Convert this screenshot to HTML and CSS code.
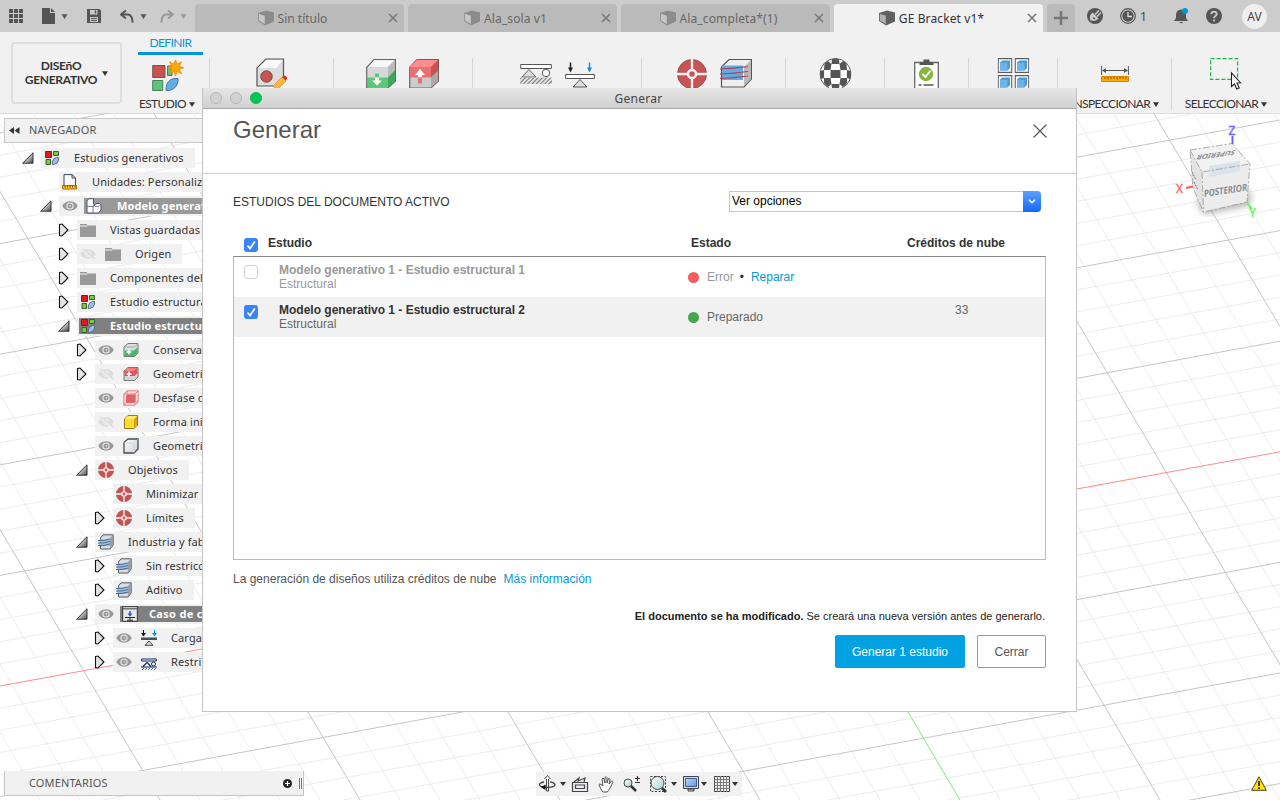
FILE: index.html
```html
<!DOCTYPE html>
<html lang="es">
<head>
<meta charset="utf-8">
<title>GE Bracket v1*</title>
<link rel="stylesheet" href="styles.css">
</head>
<body>
<svg class="defs" width="0" height="0">
  <defs>
    <linearGradient id="gTri" x1="0" y1="0" x2="1" y2="1"><stop offset=".3" stop-color="#f4f4f4"/><stop offset="1" stop-color="#444"/></linearGradient>
    <linearGradient id="gFace" x1="0" y1="0" x2="1" y2="1"><stop offset="0" stop-color="#fff"/><stop offset="1" stop-color="#cfcfcf"/></linearGradient>
    <linearGradient id="gLens" x1="0" y1="0" x2="1" y2="1"><stop offset="0" stop-color="#fff"/><stop offset="1" stop-color="#a9cfd0"/></linearGradient>
    <linearGradient id="gBlue" x1="0" y1="0" x2="1" y2="1"><stop offset="0" stop-color="#b9dcf7"/><stop offset="1" stop-color="#5f95d6"/></linearGradient>
    <pattern id="hatch" width="3" height="3" patternUnits="userSpaceOnUse" patternTransform="rotate(45)"><rect width="3" height="3" fill="#e2e2e2"/><rect width="1" height="3" fill="#777"/></pattern>
    <symbol id="cubeTab" viewBox="0 0 16 16"><path d="M0 3 8 .5 16 2.500V11.500L7 15.500 0 11z" fill="currentColor"/><path d="M.8 3.800 6.800 5.700V14L.8 10.500z" fill="#fff" opacity=".5"/></symbol>
    <symbol id="close" viewBox="0 0 10 10"><path d="M1 1 9 9M9 1 1 9" stroke="currentColor" stroke-width="1.500"/></symbol>
    <symbol id="caret" viewBox="0 0 6 5"><path d="M0 .3H6L3 5z" fill="currentColor"/></symbol>
    <symbol id="open" viewBox="0 0 12 12"><path d="M11 .8V11.200H.6z" fill="url(#gTri)" stroke="#333"/></symbol>
    <symbol id="shut" viewBox="0 0 12 14"><path d="M1.500 1.500 4 1 10 7 4 13 1.500 12.500z" fill="#e4e4e4" stroke="#111" stroke-width="1.100"/></symbol>
    <symbol id="eye" viewBox="0 0 16 12"><path d="M.3 6C3-.2 13-.2 15.700 6 13 12.200 3 12.200.3 6z" fill="#999"/><circle cx="8" cy="6" r="3.600" fill="#eee"/><circle cx="8" cy="6" r="2.500" fill="#999"/><circle cx="8.300" cy="6" r=".8" fill="#eee"/></symbol>
    <symbol id="eyeOff" viewBox="0 0 16 12"><path d="M.3 6C3-.2 13-.2 15.700 6 13 12.200 3 12.200.3 6z" fill="#dcdcdc"/><circle cx="8" cy="6" r="3" fill="#eee"/><circle cx="8" cy="6" r="1.800" fill="#d4d4d4"/><path d="M1 0 15 12" stroke="#f0f0f0" stroke-width="2"/><path d="M2.500.5 15 11" stroke="#cfcfcf"/></symbol>
    <symbol id="folder" viewBox="0 0 16 14"><path d="M0 0H6.500L8 1.500H0zM0 2.500H7L8 1.500H16V13H0z" fill="#999"/></symbol>
    <symbol id="study" viewBox="0 0 16 16"><path d="M1.500 1.500H7.500V7.500H1.500z" fill="#e2191f" stroke="#8c1a1a"/><path d="M9.500 1.500h5v4h-5zM2 9.500h4.500v5H2z" fill="#76cc3a" stroke="#3b5c35"/><path d="M14.500 7.500V10Q14 14 9.500 14.500H8.300V12Q9 8 12.500 7.500z" fill="#9cc0e4" stroke="#5b6e82"/></symbol>
    <symbol id="units" viewBox="0 0 16 16"><path d="M2 11.500V.6H10L13.500 4V11.500z" fill="#f8fbff" stroke="#3c4656"/><path d="M10 .6V4h3.500" fill="none" stroke="#3c4656"/><path d="M.5 11.500h14v3.500H.5z" fill="#ffc21a" stroke="#a86a00"/><path d="M3 12v1.500M5.500 12v1.500M8 12v1.500M10.500 12v1.500M13 12v1.500" stroke="#7c4e00"/></symbol>
    <symbol id="comps" viewBox="0 0 16 16"><path d="M1 2.500 3 .7H7.500V5.500H8V8L10 5.500H13.500L15 7V12L12.500 15H1.500L1 14z" fill="#fafcff" stroke="#4c5463"/><path d="M1 8.500H7V15M7 9l2-2M9 8.500H13L15 6.500" fill="none" stroke="#7c8493"/></symbol>
    <symbol id="cubeGreen" viewBox="0 0 16 16"><path d="M1 5 5 1.500H15V11L11.500 14.500H1z" fill="#ddd" stroke="#777"/><path d="M1.500 8.500H11L14.500 5V10.800L11.300 14H1.500z" fill="#45b868"/><path d="M1.500 5H11.500L14.500 2" fill="none" stroke="#aaa"/><path d="M6 7.500v5M3.500 10h5" stroke="#fff" stroke-width="1.500"/></symbol>
    <symbol id="cubeRed" viewBox="0 0 16 16"><path d="M1 5 5 1.500H15V11L11.500 14.500H1z" fill="#d5d5d5" stroke="#777"/><path d="M1.500 5 5.200 2H14.500V7L11.500 10H1.500z" fill="#dc5858"/><path d="M1.500 5H11L14 2.300H5z" fill="#ff8585"/><path d="M6 5.500v5M3.500 8h5" stroke="#fff" stroke-width="1.500"/></symbol>
    <symbol id="cubeOffset" viewBox="0 0 16 16"><path d="M.8 4 4 .8H15.200V12L12 15.200H.8z" fill="#fbdede" stroke="#dc7474" stroke-width=".9"/><path d="M.8 4H12V15M12 4l3-3M.8 15 4 12V1M4 12H15" fill="none" stroke="#dc7474" stroke-width=".8"/><path d="M3 6 5 4.500H12.500V11L10.500 13H3z" fill="#df6464"/></symbol>
    <symbol id="cubeYellow" viewBox="0 0 16 16"><path d="M1.500 5 5 1.500H14.500V11L11 14.500H1.500z" fill="#ffdc2e" stroke="#9d7a0c"/><path d="M11 5 14 2V11L11 14z" fill="#d4a414"/><path d="M2 5H11l3-3H5z" fill="#ffe96a"/></symbol>
    <symbol id="cubeWhite" viewBox="0 0 16 16"><path d="M1 5Q1 4 5 1H15V11Q14 12 11 15H1z" fill="url(#gFace)" stroke="#444b57" stroke-width="1.300"/><path d="M1.500 5H11V14.500M11 5l3.500-3.500" fill="none" stroke="#d3d6db"/></symbol>
    <symbol id="target" viewBox="0 0 30 30"><circle cx="15" cy="15" r="14.500" fill="#c95353" stroke="#8b5555"/><path d="M15 0V30M0 15H30" stroke="#f4f4f4" stroke-width="2.400"/><circle cx="15" cy="15" r="4" fill="#c95353" stroke="#f4f4f4" stroke-width="2.500"/></symbol>
    <symbol id="industry" viewBox="0 0 16 16"><path d="M2.500 4 5 .8H15.200V11L12 15H2.500z" fill="#d9dce0" stroke="#555c66"/><path d="M12 4V14.500L15 11V1z" fill="#999fa8"/><path d="M1 5.500H12V12H1z" fill="#9ec6ec"/><path d="M0 6.500Q6 7 12 5M0 9Q6 9.500 12 7.500M0 11.500Q6 12 12 10" fill="none" stroke="#3b5878" stroke-width=".9"/></symbol>
    <symbol id="caseIcon" viewBox="0 0 16 16"><path d="M.7.700H15.300V15.300H.7z" fill="#e8e8e8" stroke="#333"/><path d="M1 2h14v1.500H1z" fill="#777"/><path d="M8 5v5" stroke="#1e5ad2" stroke-width="1.500"/><path d="M5.500 7.500h5L8 10.500z" fill="#1e5ad2"/><path d="M3 11.500H13M8 12v2M5 14.200h6" stroke="#222"/></symbol>
    <symbol id="loads" viewBox="0 0 30 26"><path d="M5.500.5V7" stroke="#222" stroke-width="1.500"/><path d="M3 5.500H8L5.500 10.500z" fill="#222"/><path d="M24.500.5V7" stroke="#1c87dc" stroke-width="1.500"/><path d="M22 5.500h5l-2.500 5z" fill="#1c87dc"/><path d="M.6 12.500H29.400v4H.6z" fill="#fff" stroke="#555"/><path d="M15 17.500 22 25H8z" fill="#ddd" stroke="#555"/></symbol>
    <symbol id="loadS" viewBox="0 0 16 16"><path d="M2.500 0V4" stroke="#111"/><path d="M0 3H5L2.500 6.500z" fill="#111"/><path d="M13.500 0V4" stroke="#0d8bea"/><path d="M11 3h5l-2.500 3.500z" fill="#0d8bea"/><path d="M0 7.500H16v2.500H0z" fill="#465159"/><path d="M8 11 12 15.300H4z" fill="#ddd" stroke="#444"/></symbol>
    <symbol id="restS" viewBox="0 0 16 12"><path d="M.6 1h14.800v2H.6z" fill="#fff" stroke="#0f2c5d"/><path d="M2 8.500 6 4.500l4 4M0 9H16" fill="none" stroke="#0f2c5d" stroke-width="1.200"/><circle cx="12.500" cy="6" r="2" fill="none" stroke="#0f2c5d"/><path d="M1 12l2-2M4 12l2-2M7 12l2-2M10 12l2-2M13 12l2-2" stroke="#54718d"/></symbol>
    <symbol id="tile" viewBox="0 0 15 15"><path d="M.7.700H14.300V14.300H.7z" fill="#fff" stroke="#5c5c5c" stroke-width="1.200"/><path d="M2.500 4.500 5 2.500H12.500V10L10 12.500H2.500z" fill="#4b99d6"/><path d="M2.500 4.800H10V12.500H2.500z" fill="#6bb3e8"/></symbol>
  </defs>
</svg>

<div class="app">
  <div class="topbar">
    <div class="quick">
      <svg class="q-grid" width="14" height="14"><path d="M0 0h4v4H0zM5 0h4v4H5zM10 0h4v4h-4zM0 5h4v4H0zM5 5h4v4H5zM10 5h4v4h-4zM0 10h4v4H0zM5 10h4v4H5zM10 10h4v4h-4z" fill="#555"/></svg>
      <svg class="q-file" width="13" height="16"><path d="M0 0H8V5H13V16H0zM9 0 13 4H9z" fill="#555"/></svg>
      <svg class="q-caret" width="7" height="5"><use href="#caret"/></svg>
      <svg class="q-save" width="14" height="14"><path d="M0 0H12.500L14 1.500V14H0z" fill="#555"/><path d="M3 1h7.500v4.500H3zM3 8h8v5H3z" fill="#ccc"/><path d="M4 9.500h6M4 11.500h6" stroke="#555"/><path d="M8.500 1.500v3" stroke="#555" stroke-width="1.500"/></svg>
      <svg class="q-undo" width="14" height="13"><path d="M6 .5 1 4.500 6 8.500M1.500 4.500H8Q12.500 5 12.500 12.500" fill="none" stroke="#555" stroke-width="2"/></svg>
      <svg class="q-caret" width="7" height="5"><use href="#caret"/></svg>
      <svg class="q-redo" width="14" height="13"><path d="M8 .5l5 4-5 4M12.500 4.500H6Q1.500 5 1.500 12.500" fill="none" stroke="#999" stroke-width="2"/></svg>
      <svg class="q-caret dim" width="7" height="5"><use href="#caret"/></svg>
    </div>
    <div class="tabs">
      <div class="tab"><svg width="16" height="16"><use href="#cubeTab"/></svg><span>Sin título</span><svg class="x" width="10" height="10"><use href="#close"/></svg></div>
      <div class="tab"><svg width="16" height="16"><use href="#cubeTab"/></svg><span class="wide">Ala_sola v1</span><svg class="x" width="10" height="10"><use href="#close"/></svg></div>
      <div class="tab"><svg width="16" height="16"><use href="#cubeTab"/></svg><span class="wide">Ala_completa*(1)</span><svg class="x" width="10" height="10"><use href="#close"/></svg></div>
      <div class="tab active"><svg width="16" height="16"><use href="#cubeTab"/></svg><span class="wide">GE Bracket v1*</span><svg class="x" width="10" height="10"><use href="#close"/></svg></div>
      <div class="tab plus"><svg width="14" height="14"><path d="M7 0V14M0 7H14" stroke="#777" stroke-width="2.500"/></svg></div>
    </div>
    <div class="status">
      <svg class="s-plug" width="16" height="16"><circle cx="8" cy="8" r="8" fill="#555"/><path d="M3.500 12.500Q1.500 7.500 5.500 4.500L11.500 10.500Q8.500 14 4.500 12.500" fill="#ccc"/><path d="M8 6.500 12 2.500M10 8.500 14 4.500" stroke="#ccc" stroke-width="1.600"/><path d="M6 9.500 8 11" stroke="#555" stroke-width="1.500"/></svg>
      <svg class="s-clock" width="16" height="16"><circle cx="8" cy="8" r="7.300" fill="#ccc" stroke="#555" stroke-width="1.200"/><circle cx="8" cy="8" r="5.700" fill="#555"/><path d="M8 4v4.500h4" stroke="#ddd" stroke-width="1.300" fill="none"/></svg>
      <span class="jobs">1</span>
      <svg class="s-bell" width="15" height="16"><path d="M0 13 2 10V7Q2 2 7 1.500 12 2 12 7v3l2 3zM5 14h4Q8 16.500 5 14z" fill="#555"/><circle cx="11" cy="3" r="3" fill="#0696d7"/></svg>
      <svg class="s-help" width="16" height="16"><circle cx="8" cy="8" r="8" fill="#555"/><path d="M5.300 6.200Q5.500 3.700 8 3.700T10.700 6.100Q10.700 7.300 9.200 8.200 8 9 8 10.200" fill="none" stroke="#ccc" stroke-width="1.800"/><circle cx="8" cy="12.500" r="1.100" fill="#ccc"/></svg>
      <span class="avatar">AV</span>
    </div>
  </div>

  <div class="ribbon">
    <div class="workspace"><span>DISEñO<br>GENERATIVO</span><svg width="6" height="5"><use href="#caret"/></svg></div>
    <div class="group first">
      <div class="rtab">DEFINIR</div>
      <svg class="ico" width="32" height="32"><path d="M.7 5.500H13V17.500H.7z" fill="#c95353" stroke="#7d5252"/><path d="M.7 20.500h10v10H.7z" fill="#5cc57c" stroke="#507d5c"/><path d="M15.500 6H20V15.500H15.500z" fill="#5cc57c" stroke="#666"/><path d="M26 18.500V21Q25 29 17 30.500H14V28Q14.500 20 22 18.500z" fill="#61ace3" stroke="#50779b"/><path d="m23.500-.5 1.600 4.600 4.400-2.300-2.300 4.400 4.600 1.600-4.600 1.600 2.300 4.400-4.400-2.300-1.600 4.600-1.600-4.600-4.400 2.300 2.300-4.400L15.200 7.800l4.600-1.600-2.300-4.400 4.400 2.300z" fill="#ffa800" stroke="#e58200" stroke-width=".7"/></svg>
      <div class="glabel">ESTUDIO<svg width="6" height="5"><use href="#caret"/></svg></div>
    </div>
    <div class="group w124"><svg class="ico" width="32" height="32"><path d="M1 10 10 1H27.500V19L20 28H1z" fill="#ddd" stroke="#555" stroke-width="1.200"/><path d="M2 10 10.300 2H27l-7 8z" fill="#fafafa"/><circle cx="10.500" cy="18.500" r="5.700" fill="#c95353" stroke="#704747"/><path d="m17 28 9-9 4 4-9 9z" fill="#ffb640" stroke="#d18b24" stroke-width=".6"/><path d="m26 19 2-1.500q3 0 3 3.500l-1.500 1.500z" fill="#ee2b2b"/></svg></div>
    <div class="group w139 pair">
      <svg class="ico" width="30" height="32"><path d="M.7 10.500 8 2.500H29.500V24L22 31H.7z" fill="#d8d8d8" stroke="#666" stroke-width="1.200"/><path d="M2 10 8.500 3.200H28.500L22 10z" fill="#f8f8f8"/><path d="M22 10l7-7V14l-7 7z" fill="#bbb"/><path d="M1 20.500H22L29 13V23L22 30H1z" fill="#5bc779"/><path d="M22 20.500l7-7v10l-7 7z" fill="#3ca85c"/><path d="M11 16.500v4" stroke="#5bc779" stroke-width="4"/><path d="M9 20.500h4v3h3l-5 5-5-5h3z" fill="#fff"/></svg>
      <svg class="ico" width="30" height="32"><path d="M.7 10.500 8 2.500H29.500V24L22 31H.7z" fill="#ccc" stroke="#855" stroke-width="1.200"/><path d="M1 10 8 3H29V14l-7 6.500H1z" fill="#e87070"/><path d="M1 10 8 3H29l-7 7z" fill="#ff8d8d"/><path d="M22 10l7-7V14l-7 6.500z" fill="#c85151"/><path d="M22 20.500l7-6.500V24l-7 6.500z" fill="#aaa"/><path d="M9 20.500V18H6l5-6 5 6H13v2.500z" fill="#fff"/><path d="M11 20.500v6" stroke="#e87070" stroke-width="4"/></svg>
    </div>
    <div class="group w169 pair">
      <svg class="ico" width="32" height="32"><path d="M.7 7.500H31.300V11.500H.7z" fill="#fff" stroke="#555"/><path d="M9 12.500 16 20H2z" fill="#ddd" stroke="#666"/><circle cx="26" cy="16" r="3.700" fill="#fff" stroke="#555"/><path d="M.2 20.500H32V27H.2z" fill="url(#hatch)"/></svg>
      <svg class="ico" width="30" height="26"><use href="#loads"/></svg>
    </div>
    <div class="group w144 pair">
      <svg class="ico" width="30" height="30"><use href="#target"/></svg>
      <svg class="ico" width="32" height="32"><path d="M1.500 10 9 2.500H31.500V22L24 30H1.500z" fill="#eee" stroke="#555" stroke-width="1.200"/><path d="M24 10l7-7V22l-7 7z" fill="#b9b9b9"/><path d="M2 8.500H23V23H2z" fill="#61ace3"/><path d="M0 12Q14 11.500 28 9.500M0 17Q14 16.500 28 14.500M0 21.500Q14 21 28 19" fill="none" stroke="#b8404e" stroke-width="1.100"/></svg>
    </div>
    <div class="group w99"><svg class="ico" width="32" height="32" viewBox="0 0 32 32"><circle cx="16" cy="16" r="15.500" fill="#fff" stroke="#666"/><path d="M12.500 1Q16 0 19.500 1L20 6H12zM5 5.500 8.500 3 12 6 11 12H4.500zM27 5.500 23.500 3 20 6l1 6h6.500zM11 12H21V20H11zM.6 13l4-1v8l-3.500 1Q0 17 .6 13zM31.400 13l-4-1v8l3.500 1q1-4 .5-8zM4.500 20H11l1 6-3.500 3Q5 26.500 4.500 25zM27.500 20H21l-1 6 3.500 3q3.500-2.500 4-4zM12 26h8l-.5 5q-3.500 1-7 0z" fill="#555"/></svg></div>
    <div class="group w84"><svg class="ico" width="26" height="32"><path d="M1.200 4.500H24.800V34H1.200z" fill="#fff" stroke="#666" stroke-width="1.300"/><path d="M6 7V4H10V1.500h6V4h4v3z" fill="#555"/><circle cx="12.500" cy="16" r="7.200" fill="#86b63c"/><path d="m9 16 3 3 5-6.500" stroke="#fff" stroke-width="2" fill="none"/><path d="M5 27h3M10 27H20" stroke="#555" stroke-width="1.400"/></svg></div>
    <div class="group w89"><svg class="ico" width="32" height="32"><use href="#tile" y="1" width="15" height="15"/><use href="#tile" x="17" y="1" width="15" height="15"/><use href="#tile" y="18" width="15" height="15"/><use href="#tile" x="17" y="18" width="15" height="15"/></svg></div>
    <div class="group w114"><svg class="ico" width="28" height="32"><path d="M.6 9v9M27.400 9v9M3 13.500H25" stroke="#555"/><path d="M1 13.500l4-2.500v5zM27 13.500l-4-2.500v5z" fill="#555"/><path d="M.5 19.500h27v5H.5z" fill="#ffa800" stroke="#d78600"/><path d="M4 20v2M7 20v2.500M10 20v2M13 20v2M16 20v2.500M19 20v2M22 20v2M25 20v2.500" stroke="#654000" stroke-width=".8"/></svg><div class="glabel">INSPECCIONAR<svg width="6" height="5"><use href="#caret"/></svg></div></div>
    <div class="group last"><svg class="ico" width="32" height="34"><path d="M.6 1.600H27.600V22.400H.6z" fill="none" stroke="#22b24c" stroke-width="1.200" stroke-dasharray="4 2"/><path d="M21.500 16v13.500l3-2.500 2.200 5 2.500-1-2.200-5 3.500-.3z" fill="#fff" stroke="#222" stroke-width="1.100"/></svg><div class="glabel">SELECCIONAR<svg width="6" height="5"><use href="#caret"/></svg></div></div>
  </div>

  <div class="canvas">
    <svg class="grid" width="1280" height="687" viewBox="0 113 1280 687">
      <g id="minor"></g><g id="major"></g>
      <path d="M0 686 1280 451.800" stroke="#ff8c8c"/>
      <path d="M908 712 960 800" stroke="#7ee87e"/>
    </svg>

    <svg class="viewcube" width="90" height="100" viewBox="1170 120 90 100">
      <defs><filter id="soft"><feGaussianBlur stdDeviation="3.500"/></filter></defs>
      <path d="M1196 200l8 14 46-9 0-14z" fill="#777" opacity=".6" filter="url(#soft)"/>
      <path d="M1190 150 1232 143.500 1250 164 1202 172z" fill="#f2f2f2"/>
      <path d="M1190 150 1202 172 1203.500 212 1193 188z" fill="#e3e3e3"/>
      <path d="M1202 172 1250 164 1247 202 1203.500 212z" fill="#ececec"/>
      <path d="M1209 166l31-5 .5 10-31 6z" fill="#dde2ea"/>
      <path d="M1190 150 1232 143.500 1250 164 1247 202 1203.500 212 1193 188zM1190 150l12 22 48-8M1202 172l1.500 40" fill="none" stroke="#999" stroke-width=".8" stroke-dasharray="7 2 2 2"/>
      <path d="M1192 172l4 8M1194 182l4 8" stroke="#777" stroke-dasharray="2 1"/>
      <text class="cube-t" transform="matrix(1 -.15 -.03 1.150 1204 197)" textLength="43" lengthAdjust="spacingAndGlyphs">POSTERIOR</text>
      <text class="cube-t top" transform="matrix(-1 .13 .35 -.8 1236 150)" textLength="38" lengthAdjust="spacingAndGlyphs">SUPERIOR</text>
      <path d="M1232.500 136v8" stroke="#6666ff" stroke-width="2"/><path d="M1186 188l7-1.500" stroke="#ff5b5b" stroke-width="2"/><path d="M1247 203l5 6" stroke="#66f566" stroke-width="2"/>
      <text class="axis z" x="1228.500" y="135">Z</text><text class="axis ax" x="1176" y="193">X</text><text class="axis y" x="1249" y="217">Y</text>
    </svg>

    <div class="browser">
      <div class="panel-head"><svg width="11" height="7"><path d="M5 0V7L0 3.500zM10.500 0V7L5.500 3.500z" fill="#333"/></svg><span>NAVEGADOR</span></div>
      <ul class="tree">
        <li class="d0"><svg class="tg"><use href="#open"/></svg><div class="box"><svg class="i"><use href="#study"/></svg><span>Estudios generativos</span></div></li>
        <li class="d1"><i class="tg"></i><div class="box fill"><svg class="i"><use href="#units"/></svg><span>Unidades: Personaliz</span></div></li>
        <li class="d1"><svg class="tg"><use href="#open"/></svg><div class="box fill"><svg class="e"><use href="#eye"/></svg><div class="sel mid"><svg class="i"><use href="#comps"/></svg><span>Modelo generat</span></div></div></li>
        <li class="d2"><svg class="tg c"><use href="#shut"/></svg><div class="box fill"><svg class="f"><use href="#folder"/></svg><span>Vistas guardadas</span></div></li>
        <li class="d2"><svg class="tg c"><use href="#shut"/></svg><div class="box"><svg class="e"><use href="#eyeOff"/></svg><svg class="f"><use href="#folder"/></svg><span>Origen</span></div></li>
        <li class="d2"><svg class="tg c"><use href="#shut"/></svg><div class="box fill"><svg class="f"><use href="#folder"/></svg><span>Componentes del</span></div></li>
        <li class="d2"><svg class="tg c"><use href="#shut"/></svg><div class="box fill"><svg class="i"><use href="#study"/></svg><span>Estudio estructura</span></div></li>
        <li class="d2"><svg class="tg"><use href="#open"/></svg><div class="box fill full"><div class="sel"><svg class="i"><use href="#study"/></svg><span>Estudio estructu</span></div></div></li>
        <li class="d3"><svg class="tg c"><use href="#shut"/></svg><div class="box fill"><svg class="e"><use href="#eye"/></svg><svg class="i"><use href="#cubeGreen"/></svg><span>Conserva</span></div></li>
        <li class="d3"><svg class="tg c"><use href="#shut"/></svg><div class="box fill"><svg class="e"><use href="#eyeOff"/></svg><svg class="i"><use href="#cubeRed"/></svg><span>Geometrí</span></div></li>
        <li class="d3"><i class="tg"></i><div class="box fill"><svg class="e"><use href="#eye"/></svg><svg class="i"><use href="#cubeOffset"/></svg><span>Desfase d</span></div></li>
        <li class="d3"><i class="tg"></i><div class="box fill"><svg class="e"><use href="#eyeOff"/></svg><svg class="i"><use href="#cubeYellow"/></svg><span>Forma ini</span></div></li>
        <li class="d3"><i class="tg"></i><div class="box fill"><svg class="e"><use href="#eye"/></svg><svg class="i"><use href="#cubeWhite"/></svg><span>Geometrí</span></div></li>
        <li class="d3"><svg class="tg"><use href="#open"/></svg><div class="box"><svg class="i"><use href="#target"/></svg><span>Objetivos</span></div></li>
        <li class="d4"><i class="tg"></i><div class="box fill"><svg class="i"><use href="#target"/></svg><span>Minimizar</span></div></li>
        <li class="d4"><svg class="tg c"><use href="#shut"/></svg><div class="box"><svg class="i"><use href="#target"/></svg><span>Límites</span></div></li>
        <li class="d3"><svg class="tg"><use href="#open"/></svg><div class="box fill"><svg class="i"><use href="#industry"/></svg><span>Industria y fab</span></div></li>
        <li class="d4"><svg class="tg c"><use href="#shut"/></svg><div class="box fill"><svg class="i"><use href="#industry"/></svg><span>Sin restricc</span></div></li>
        <li class="d4"><svg class="tg c"><use href="#shut"/></svg><div class="box"><svg class="i"><use href="#industry"/></svg><span>Aditivo</span></div></li>
        <li class="d3"><svg class="tg"><use href="#open"/></svg><div class="box fill"><svg class="e"><use href="#eye"/></svg><div class="sel mid case"><svg class="i"><use href="#caseIcon"/></svg><span>Caso de c</span></div></div></li>
        <li class="d4"><svg class="tg c"><use href="#shut"/></svg><div class="box fill"><svg class="e"><use href="#eye"/></svg><svg class="i"><use href="#loadS"/></svg><span>Carga</span></div></li>
        <li class="d4"><svg class="tg c"><use href="#shut"/></svg><div class="box fill"><svg class="e"><use href="#eye"/></svg><svg class="i rest"><use href="#restS"/></svg><span>Restri</span></div></li>
      </ul>
    </div>

    <div class="comments"><span>COMENTARIOS</span><svg width="9" height="9"><circle cx="4.500" cy="4.500" r="4.500" fill="#222"/><path d="M4.500 2v5M2 4.500h5" stroke="#fff" stroke-width="1.200"/></svg><i class="grip"></i></div>

    <div class="viewbar">
      <svg width="206" height="24"><g fill="none" stroke="#444">
        <path d="M10.500 6h2v13h-2z" fill="#fff"/><path d="m8.500 7 3-3.500 3 3.500" fill="#fff"/><path d="M8 10Q3 11 3.500 13 4 15 11 15.300 19 15.500 19 12.500 18 10 14 9.800" stroke-width="1.300"/><path d="M9.500 12.500 5 15.300 9.500 18z" fill="#111" stroke="none"/>
        <path d="M36.500 10.500h15v9h-15zM39.500 13h9v3.500h-9zM38 10 43 6l-1 3 7-3-1 4" fill="#eceef3" stroke-width="1.200"/>
        <path d="M66 19l-3-6q0-2 2-.5L67 14 66 7q1-2 2 0l1 4V5.500q1.500-1.500 2 0V11l1.500-4.500q2 0 1.500 1.500L73 12l2.500-3q2 0 1.300 1.500L74 16q-1 3-3 4h-4z" fill="#fff" stroke="#555"/>
        <circle cx="92" cy="11" r="4" fill="url(#gLens)"/><path d="M95 14l5 5" stroke="#333" stroke-width="2.500"/><path d="M101.500 4v5M99 6.500h5M99 10.500h5" stroke="#333" stroke-width="1.100"/>
        <path d="M114.500 4.500h15v15h-15z" stroke-dasharray="2 1.500"/><circle cx="121.500" cy="11" r="6.500" fill="url(#gLens)"/><path d="M126 16l4 4" stroke="#333" stroke-width="2.600"/>
        <path d="M147.500 4.500h15v12h-15z" fill="#ddd"/><path d="M149.500 6.500h11v8h-11z" fill="url(#gBlue)" stroke="#3b5d97"/><path d="M152 19h6v-2h-6z" fill="#ccc"/>
        <path d="M178.500 4.500h15v15h-15z" fill="#eee"/><path d="M181.500 4v16M184.500 4v16M187.500 4v16M190.500 4v16M178 7.500h16M178 10.500h16M178 13.500h16M178 16.500h16" stroke="#777"/></g>
        <path d="M24 10h6l-3 4zM135 10h6l-3 4zM165 10h6l-3 4zM196 10h6l-3 4z" fill="#333"/></svg>
    </div>
    <svg class="warn" width="16" height="15"><path d="M8 .8 15.300 14.300H.7z" fill="#ffdf1b" stroke="#4a4410" stroke-linejoin="round"/><path d="M8 5v5M8 11.300v1.700" stroke="#222" stroke-width="1.700"/></svg>
  </div>

  <section class="dialog">
    <div class="titlebar"><i class="dot"></i><i class="dot"></i><i class="dot green"></i><span>Generar</span></div>
    <header><h1>Generar</h1><svg width="14" height="14"><path d="M.5.500 13.500 13.500M13.500.500.5 13.500" stroke="#555" stroke-width="1.200"/></svg></header>
    <div class="body">
      <div class="filter"><span>ESTUDIOS DEL DOCUMENTO ACTIVO</span><div class="select"><span>Ver opciones</span><b><svg width="8" height="5"><path d="m1 .8 3 3 3-3" fill="none" stroke="#fff" stroke-width="1.500"/></svg></b></div></div>
      <div class="thead"><i class="cb on"><svg width="14" height="14"><path d="m3.500 7.500 2.500 3 4.800-7" fill="none" stroke="#fff" stroke-width="1.700"/></svg></i><span class="t1">Estudio</span><span class="t2">Estado</span><span class="t3">Créditos de nube</span></div>
      <div class="table">
        <div class="tr off"><i class="cb"></i><div class="name"><b>Modelo generativo 1 - Estudio estructural 1</b><span>Estructural</span></div><div class="state"><i class="red"></i><span>Error</span><em>•</em><a>Reparar</a></div><div class="cred"></div></div>
        <div class="tr on"><i class="cb on"><svg width="14" height="14"><path d="m3.500 7.500 2.500 3 4.800-7" fill="none" stroke="#fff" stroke-width="1.700"/></svg></i><div class="name"><b>Modelo generativo 1 - Estudio estructural 2</b><span>Estructural</span></div><div class="state"><i></i><span>Preparado</span></div><div class="cred">33</div></div>
      </div>
      <p class="info">La generación de diseños utiliza créditos de nube<a>Más información</a></p>
      <p class="note"><b>El documento se ha modificado.</b> Se creará una nueva versión antes de generarlo.</p>
      <div class="actions"><button class="primary">Generar 1 estudio</button><button>Cerrar</button></div>
    </div>
  </section>
</div>
<script src="grid.js"></script>
</body>
</html>
```
FILE: styles.css
```css
* { box-sizing: border-box; }
body { margin: 0; font-family: "Noto Sans", sans-serif; color: #333; }
.defs { position: absolute; }
svg { display: block; flex: none; }
.app { position: relative; width: 1280px; height: 800px; overflow: hidden; display: flex; flex-direction: column; background: #fff; }

/* top bar */
.topbar { height: 32px; flex: none; display: flex; background: #ccc; }
.quick { width: 195px; display: flex; align-items: center; padding-left: 9px; color: #555; }
.q-file { margin-left: 19px; }
.q-caret { margin-left: 6px; }
.q-save { margin-left: 19px; }
.q-undo { margin-left: 19px; }
.q-redo { margin-left: 13px; }
.dim { color: #999; }
.tabs { display: flex; gap: 4px; align-items: flex-end; }
.tab { width: 209px; height: 28px; background: #bababa; border-radius: 4px 4px 0 0; display: flex; align-items: center; justify-content: center; gap: 4px; padding-right: 14px; position: relative; font-size: 12px; color: #666; white-space: nowrap; }
.tab .wide { letter-spacing: .12px; }
.tab > svg:first-child { color: #8c8c8c; }
.tab.active { background: #f1f1f1; color: #333; }
.tab.active > svg:first-child { color: #606060; }
.tab .x { position: absolute; right: 6px; top: 9px; color: #777; }
.tab.plus { width: 28px; padding: 0; }
.status { flex: 1; display: flex; align-items: center; padding-left: 12px; font-size: 12px; }
.s-clock { margin-left: 17px; }
.jobs { margin-left: 4px; width: 8px; color: #444; }
.s-bell { margin-left: 26px; }
.s-help { margin-left: 17px; }
.avatar { margin-left: 20px; width: 25px; height: 25px; border-radius: 50%; background: #efefef; display: grid; place-items: center; color: #444; }

/* ribbon */
.ribbon { height: 82px; flex: none; display: flex; background: #f1f1f1; border-bottom: 1px solid #ddd; }
.workspace { margin: 10px 0 0 11px; width: 111px; height: 62px; border: 2px solid #dedede; border-radius: 4px; display: flex; align-items: center; justify-content: center; gap: 5px; font: bold 12px/14px Lato, sans-serif; letter-spacing: -.3px; text-align: center; }
.group { height: 82px; display: flex; flex-direction: column; align-items: center; position: relative; padding-top: 25px; }
.group:not(.last)::after { content: ""; position: absolute; right: 0; top: 26px; height: 52px; width: 1px; background: #d6d6d6; }
.group.first { width: 88px; padding-top: 4px; }
.rtab { width: 65px; margin-left: 9px; height: 19px; border-bottom: 3px solid #0696d7; color: #0696d7; font: 12px/14px Lato, sans-serif; letter-spacing: -.6px; text-align: center; }
.first .ico { margin: 5px 0 0 3px; }
.glabel { margin-top: auto; height: 18px; display: flex; align-items: center; gap: 3px; font: 12px/14px Lato, sans-serif; letter-spacing: -.6px; margin-bottom: 1px; white-space: nowrap; }
.group.first .glabel { margin-left: 2px; }
.pair { flex-direction: row; justify-content: center; align-items: flex-start; gap: 13px; }
.w124 { width: 124px; } .w139 { width: 139px; } .w169 { width: 169px; } .w144 { width: 144px; } .w99 { width: 99px; } .w84 { width: 84px; } .w89 { width: 89px; } .w114 { width: 114px; } .last { flex: 1; }
.w124 .ico { margin-top: 1px; }
.w139 .ico { transform: translateX(-1px); }
.w169 .ico + .ico { margin-top: 5px; }
.w144 .ico:first-child { margin-top: 2px; }
.w99 .ico, .w84 .ico { transform: translateX(-.5px); margin-top: 1px; }
.w89 .ico { transform: translateX(-.5px); }

/* model canvas */
.canvas { position: relative; flex: 1; background: #fff; }
.grid { position: absolute; left: 0; top: -1px; }
.viewcube { position: absolute; left: 1170px; top: 6px; }
.cube-t { font: bold 8.500px "Noto Sans", sans-serif; fill: #888c94; }
.axis { font: 12px "Noto Sans", sans-serif; }
.z { fill: #6666ff; stroke: #6666ff; stroke-width: .4; } .ax { fill: #ff6b6b; stroke: #ff6b6b; stroke-width: .4; } .y { fill: #66f566; stroke: #66f566; stroke-width: .4; }

.browser { position: absolute; left: 4px; top: 4px; width: 202px; }
.panel-head { height: 25px; border: 1px solid #c8c8c8; border-right: 0; background: #f1f1f1; display: flex; align-items: center; gap: 9px; padding-left: 4px; font-size: 11px; letter-spacing: .15px; color: #555; }
.panel-head span { padding-bottom: 2px; }
.tree { list-style: none; margin: 3px 0 0; padding: 0; font-size: 11px; }
.tree li { height: 24px; display: flex; align-items: center; white-space: nowrap; }
.d0 { padding-left: 18px; } .d1 { padding-left: 36px; } .d2 { padding-left: 54px; } .d3 { padding-left: 72px; } .d4 { padding-left: 90px; }
.tg { width: 12px; height: 12px; margin-right: 7px; flex: none; }
.tg.c { height: 14px; }
.box { height: 20px; background: #f1f1f1; display: flex; align-items: center; padding: 0 11px 0 3px; letter-spacing: .12px; }
.fill { flex: 1; min-width: 0; padding-right: 0; }
.i { width: 16px; height: 16px; }
.i.rest { height: 12px; margin-top: 3px; }
.f { width: 16px; height: 14px; margin-top: 1px; }
.e { width: 16px; height: 12px; }
.e + .i, .e + .f { margin-left: 9px; }
.box span { margin-left: 14px; padding-bottom: 2px; }
.sel { flex: 1; background: #999; color: #fff; font-weight: bold; height: 16px; display: flex; align-items: center; padding: 0 0 0 2px; }
.full { padding-left: 2px; }
.full .sel { background: #808080; padding-left: 1px; }
.mid { margin-left: 6px; }
.mid span { margin-left: 15px; }
.sel.case { background: #808080; }
.case span { margin-left: 11px; letter-spacing: .3px; }

.comments { position: absolute; left: 4px; top: 657px; width: 300px; height: 25px; background: #f1f1f1; border: 1px solid #c4c4c4; border-top: 0; display: flex; align-items: center; padding-left: 24px; font-size: 11px; letter-spacing: .12px; color: #555; }
.comments span { padding-bottom: 2px; }
.comments svg { margin-left: auto; }
.grip { width: 3px; height: 11px; border: solid #777; border-width: 0 1px; margin: 0 1px 0 7px; }
.viewbar { position: absolute; left: 536px; top: 658px; background: #f1f1f1; }
.warn { position: absolute; left: 1251px; top: 662px; }

/* generate dialog */
.dialog { position: absolute; left: 202px; top: 88px; width: 875px; height: 624px; background: #fff; border: 1px solid #c4c4c4; border-top: 0; font: 12px/14px "Liberation Sans", Arial, sans-serif; }
.titlebar { height: 21px; background: linear-gradient(#e6e6e6, #d0d0d0); border-bottom: 1px solid #a8a8a8; display: flex; align-items: center; gap: 8px; padding-left: 7px; font: 12px/14px "Noto Sans", sans-serif; color: #444; }
.titlebar span { flex: 1; text-align: center; padding: 1px 69px 0 0; letter-spacing: .3px; }
.dot { width: 12px; height: 12px; border-radius: 50%; background: #d2d2d2; border: 1px solid #b5b5b5; }
.green { background: #00c853; border-color: #10b44c; }
header { height: 65px; border-bottom: 1px solid #d0d0d0; display: flex; justify-content: space-between; padding: 7px 29px 0 30px; }
header svg { margin-top: 8px; }
h1 { margin: 0; font-size: 24px; line-height: 27px; font-weight: normal; color: #555; }
.body { padding: 17px 30px 0; }
.filter { height: 21px; display: flex; justify-content: space-between; align-items: center; }
.select { width: 312px; height: 21px; margin-right: 5px; border: 1px solid #c6c6c6; border-right: 0; border-radius: 0 4px 4px 0; display: flex; color: #000; line-height: 18px; padding-left: 2px; }
.select b { margin: -1px 0 -1px auto; width: 18px; border-radius: 0 4px 4px 0; background: linear-gradient(#5fa0fb, #1168fb); display: grid; place-items: center; }
.thead { height: 44px; display: grid; grid-template-columns: 35px 423px 216px 1fr; padding-top: 24px; font-weight: bold; }
.cb { width: 14px; height: 14px; border: 1px solid #d2d2d2; border-radius: 3px; background: #fff; margin-left: 11px; }
.cb.on { background: #3985f8; border: 0; }
.thead .cb { margin-top: 2px; }
.table { height: 304px; border: 1px solid #bababa; border-top-color: #888; }
.tr { height: 40px; display: grid; grid-template-columns: 45px 409px 267px 1fr; padding-top: 6px; }
.tr .cb { margin: 2px 0 0 10px; }
.name b, .name span { display: block; }
.name span { color: #666; }
.off b, .off .name span, .off .state span { color: #999; }
.tr.on { background: #f1f1f1; }
.state { display: flex; align-items: center; height: 14px; margin-top: 7px; color: #666; }
.state i { width: 11px; height: 11px; border-radius: 50%; background: #43a84d; margin-right: 8px; }
.state .red { background: #f25c5c; }
.state em { font-style: normal; margin: 0 7px 0 6px; color: #333; }
a { color: #0696d7; }
.cred { color: #666; }
p { margin: 0; }
.info { margin-top: 12px; color: #555; }
.info a { margin-left: 7px; }
.note { margin: 23px 1px 0 0; font-size: 11px; text-align: right; white-space: nowrap; color: #222; }
.actions { margin-top: 12px; display: flex; justify-content: flex-end; gap: 12px; }
button { width: 69px; height: 33px; padding: 0; font: 12px "Liberation Sans", Arial, sans-serif; color: #555; background: #fff; border: 1px solid #999; border-radius: 2px; }
.primary { width: 130px; color: #fff; background: #02a2e2; border-color: #02a2e2; }
```
FILE: grid.js
```js
// Ground plane: two families of parallel lines, every fifth one is darker.
const NS = 'http://www.w3.org/2000/svg';
function line(x1, y1, x2, y2, major) {
  const l = document.createElementNS(NS, 'line');
  l.setAttribute('x1', x1); l.setAttribute('y1', y1);
  l.setAttribute('x2', x2); l.setAttribute('y2', y2);
  l.setAttribute('stroke', major ? '#c6c6c6' : '#ececec');
  document.getElementById(major ? 'major' : 'minor').appendChild(l);
}
for (let k = -30; k <= 18; k++) {
  const y = 686 + k * 22.12;
  if (k) line(0, y, 1280, y - 234.2, k % 5 === 0);
}
for (let k = -25; k <= 25; k++) {
  const x = 908 + k * 40;
  if (k) line(x - 592, -288.500, x + 59.200, 812, k % 5 === 0);
}
```
